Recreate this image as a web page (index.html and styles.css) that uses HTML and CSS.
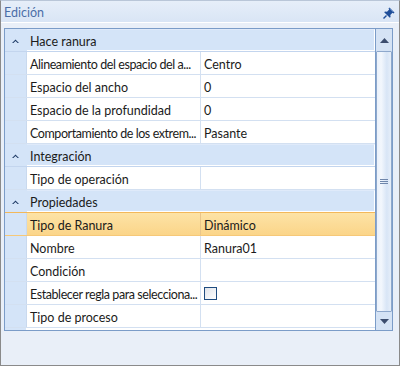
FILE: index.html
```html
<!DOCTYPE html>
<html lang="es">
<head>
<meta charset="utf-8">
<link rel="stylesheet" href="styles.css">
</head>
<body>
<div class="panel">
  <div class="titlebar">
    <span class="title">Edición</span>
    <svg class="pin" width="12" height="12" viewBox="0 0 12 12">
      <path d="M6.5 0.5 L11.5 5.5 L10.5 6.5 L9.5 5.8 L7.3 8 L7.6 10 L6.8 10.8 L1.2 5.2 L2 4.4 L4 4.7 L6.2 2.5 L5.5 1.5 Z" fill="#1f4e99"/>
      <path d="M3.5 8.5 L0.5 11.5" stroke="#1f4e99" stroke-width="1.4"/>
      <path d="M7 1.6 L10.4 5" stroke="#8fb0e0" stroke-width="0.8"/>
    </svg>
  </div>
  <div class="content">
    <div class="grid">
      <div class="rows">
        <div class="cat"><span class="gut"><svg class="chev" width="7" height="4" viewBox="0 0 7 4"><path d="M0 4 L3.5 0.5 L7 4 L5.6 4 L3.5 2 L1.4 4 Z" fill="#1e3a66"/></svg></span><span class="catlabel">Hace ranura</span></div>
        <div class="row"><span class="gut"></span><span class="lbl trunc">Alineamiento del espacio del a...</span><span class="val">Centro</span></div>
        <div class="row"><span class="gut"></span><span class="lbl">Espacio del ancho</span><span class="val">0</span></div>
        <div class="row"><span class="gut"></span><span class="lbl">Espacio de la profundidad</span><span class="val">0</span></div>
        <div class="row"><span class="gut"></span><span class="lbl trunc">Comportamiento de los extrem...</span><span class="val">Pasante</span></div>
        <div class="cat"><span class="gut"><svg class="chev" width="7" height="4" viewBox="0 0 7 4"><path d="M0 4 L3.5 0.5 L7 4 L5.6 4 L3.5 2 L1.4 4 Z" fill="#1e3a66"/></svg></span><span class="catlabel">Integración</span></div>
        <div class="row"><span class="gut"></span><span class="lbl">Tipo de operación</span><span class="val"></span></div>
        <div class="cat"><span class="gut"><svg class="chev" width="7" height="4" viewBox="0 0 7 4"><path d="M0 4 L3.5 0.5 L7 4 L5.6 4 L3.5 2 L1.4 4 Z" fill="#1e3a66"/></svg></span><span class="catlabel">Propiedades</span></div>
        <div class="row sel"><span class="gut"></span><span class="lbl">Tipo de Ranura</span><span class="val">Dinámico</span></div>
        <div class="row"><span class="gut"></span><span class="lbl">Nombre</span><span class="val">Ranura01</span></div>
        <div class="row"><span class="gut"></span><span class="lbl">Condición</span><span class="val"></span></div>
        <div class="row"><span class="gut"></span><span class="lbl trunc">Establecer regla para selecciona...</span><span class="val"><span class="check"></span></span></div>
        <div class="row"><span class="gut"></span><span class="lbl">Tipo de proceso</span><span class="val"></span></div>
      </div>
      <div class="scrollbar">
        <div class="sbtn up"><svg width="9" height="5" viewBox="0 0 9 5"><path d="M0 5 L4.5 0 L9 5 Z" fill="#3c4d6e"/></svg></div>
        <div class="thumb"><span class="grip"></span></div>
        <div class="sbtn down"><svg width="9" height="5" viewBox="0 0 9 5"><path d="M0 0 L9 0 L4.5 5 Z" fill="#3c4d6e"/></svg></div>
      </div>
    </div>
  </div>
</div>
</body>
</html>
```
FILE: styles.css
```css
* { box-sizing: border-box; }
html, body { margin: 0; padding: 0; }
body {
  width: 400px;
  height: 366px;
  font-family: Lato, "Liberation Sans", Arial, sans-serif;
  font-size: 12.5px;
  color: #1b1b1b;
  overflow: hidden;
}
.panel {
  width: 400px;
  height: 366px;
  background: #e9eff8;
  border: 1px solid #8a8a8a;
  border-top-color: #b9c6d8;
  display: flex;
  flex-direction: column;
}
.titlebar {
  height: 22px;
  flex: none;
  background: linear-gradient(#e6eef9, #d9e5f5);
  border-bottom: 1px solid #ffffff;
  display: flex;
  align-items: center;
  justify-content: space-between;
  padding: 1px 4px 0 3px;
}
.title {
  color: #4a6ea8;
}
.pin { margin-top: 1px; }
.content {
  flex: 1;
  padding: 5px 6px 0 3px;
}
.grid {
  height: 303px;
  border: 1px solid #7b9cc8;
  background: #ffffff;
  display: flex;
}
.rows {
  flex: 1;
  display: flex;
  flex-direction: column;
  background: linear-gradient(to right, #d4e4f8 21px, #ffffff 21px);
}
.row, .cat {
  height: 23px;
  flex: none;
  display: flex;
  align-items: stretch;
  border-bottom: 1px solid #d3e0f1;
}
.gut {
  width: 22px;
  flex: none;
  background: #d4e4f8;
  border-right: 1px solid #c9d9ee;
  display: flex;
  align-items: center;
  justify-content: center;
}
.chev { margin-right: 1px; margin-top: 1px; }
.cat {
  background: #d4e4f8;
  border-bottom: 1px solid #c3d5ee;
}
.cat .gut { border-right: none; }
.catlabel {
  flex: 1;
  display: flex;
  align-items: center;
  padding: 2px 0 0 3px;
  border: 1px solid #ffffff;
  border-left: none;
  border-top-color: #dfeafa;
}
.lbl {
  width: 174px;
  flex: none;
  padding: 2px 0 0 3px;
  display: flex;
  align-items: center;
  white-space: nowrap;
  overflow: hidden;
  border-right: 1px solid #d3e0f1;
}
.lbl.trunc { letter-spacing: -0.42px; }
.val {
  flex: 1;
  padding: 2px 0 0 3px;
  display: flex;
  align-items: center;
}
.row.sel .lbl, .row.sel .val {
  background: linear-gradient(#fde3a6, #fbd589);
}
.row.sel {
  border-top: 1px solid #f3b85a;
  margin-top: -1px;
  height: 24px;
  border-bottom-color: #f6c878;
}
.row.sel .lbl { border-right-color: #e9c58a; }
.check {
  width: 13px;
  height: 13px;
  border: 1px solid #1f4c80;
  background: linear-gradient(135deg, #dfe3ea, #ffffff);
  margin-top: -2px;
}
.scrollbar {
  width: 17px;
  flex: none;
  border-left: 1px solid #7b9cc8;
  background: #e6eef9;
  display: flex;
  flex-direction: column;
}
.sbtn {
  flex: none;
  display: flex;
  align-items: center;
  justify-content: center;
  background: #d5e3f5;
}
.sbtn.up { height: 22px; }
.sbtn.down { height: 18px; }
.thumb {
  flex: 1;
  border: 1px solid #8ea8cc;
  border-radius: 1px;
  background: linear-gradient(to right, #eaf1fb, #f3f7fd 30%, #d8e5f6 70%, #e6eef9);
  display: flex;
  align-items: center;
  justify-content: center;
}
.grip {
  width: 8px;
  height: 5px;
  border-top: 1px solid #6f86ab;
  border-bottom: 1px solid #6f86ab;
  position: relative;
}
.grip::after {
  content: "";
  position: absolute;
  left: 0;
  right: 0;
  top: 1px;
  border-top: 1px solid #6f86ab;
}
```
